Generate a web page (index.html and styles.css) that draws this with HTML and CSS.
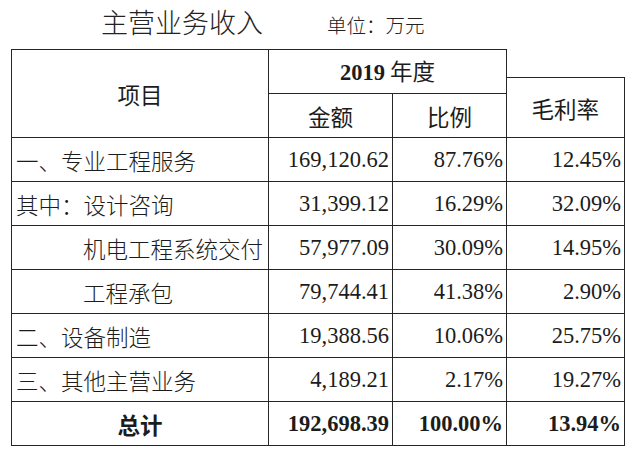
FILE: index.html
```html
<!DOCTYPE html>
<html lang="zh-CN">
<head>
<meta charset="utf-8">
<title>主营业务收入</title>
<link rel="stylesheet" href="styles.css">
</head>
<body>
<div class="caption">
  <span class="title">主营业务收入</span>
  <span class="unit">单位：万元</span>
</div>
<table class="rev">
  <colgroup>
    <col class="c1"><col class="c2"><col class="c3"><col class="c4">
  </colgroup>
  <thead>
    <tr>
      <th rowspan="2" class="h-item">项目</th>
      <th colspan="2" class="h-year"><b class="num">2019</b> 年度</th>
      <th rowspan="2" class="h-margin"><div class="margin-box">毛利率</div></th>
    </tr>
    <tr>
      <th>金额</th>
      <th>比例</th>
    </tr>
  </thead>
  <tbody>
    <tr><td class="name">一、专业工程服务</td><td class="num">169,120.62</td><td class="num">87.76%</td><td class="num">12.45%</td></tr>
    <tr><td class="name">其中：设计咨询</td><td class="num">31,399.12</td><td class="num">16.29%</td><td class="num">32.09%</td></tr>
    <tr><td class="name sub">机电工程系统交付</td><td class="num">57,977.09</td><td class="num">30.09%</td><td class="num">14.95%</td></tr>
    <tr><td class="name sub">工程承包</td><td class="num">79,744.41</td><td class="num">41.38%</td><td class="num">2.90%</td></tr>
    <tr><td class="name">二、设备制造</td><td class="num">19,388.56</td><td class="num">10.06%</td><td class="num">25.75%</td></tr>
    <tr><td class="name">三、其他主营业务</td><td class="num">4,189.21</td><td class="num">2.17%</td><td class="num">19.27%</td></tr>
    <tr class="total"><td class="center">总计</td><td class="num">192,698.39</td><td class="num">100.00%</td><td class="num">13.94%</td></tr>
  </tbody>
</table>
</body>
</html>
```

FILE: styles.css
```css
html, body {
  margin: 0;
  padding: 0;
  background: #ffffff;
}

body {
  color: #1c1c1c;
  font-family: "Liberation Serif", "Noto Sans CJK SC", serif;
}

.caption {
  height: 49px;
  display: flex;
  align-items: baseline;
  padding-left: 101px;
  box-sizing: border-box;
  padding-top: 4px;
  font-family: "Noto Sans CJK SC", sans-serif;
  font-weight: 300;
  color: #222;
}

.title {
  font-size: 27px;
  line-height: 36px;
}

.unit {
  font-size: 19.5px;
  margin-left: 64px;
}

.rev {
  margin-left: 11px;
  border-collapse: collapse;
  table-layout: fixed;
  width: 613px;
  font-size: 22.5px;
}

.c1 { width: 257px; }
.c2 { width: 124px; }
.c3 { width: 114px; }
.c4 { width: 118px; }

.rev th,
.rev td {
  border: 1px solid #262626;
  height: 43px;
  padding: 0 4px;
  line-height: 26px;
  white-space: nowrap;
}

.rev th {
  font-weight: 400;
  text-align: center;
  font-family: "Noto Sans CJK SC", sans-serif;
}

.rev th .num {
  font-family: "Liberation Serif", serif;
  font-weight: bold;
}

.rev .h-margin {
  border-top: none;
  border-right: none;
  padding: 0;
  vertical-align: bottom;
}

.margin-box {
  height: 59px;
  border-top: 1px solid #262626;
  border-right: 1px solid #262626;
  display: flex;
  align-items: center;
  justify-content: center;
}

.rev td.name {
  text-align: left;
  font-family: "Noto Sans CJK SC", sans-serif;
  font-weight: 300;
  padding-left: 4px;
}

.rev td.sub {
  padding-left: 71px;
}

.rev td.num {
  text-align: right;
  padding-right: 3px;
}

.rev td.center {
  text-align: center;
  font-family: "Noto Sans CJK SC", sans-serif;
}

.total td {
  font-weight: bold;
}
```
